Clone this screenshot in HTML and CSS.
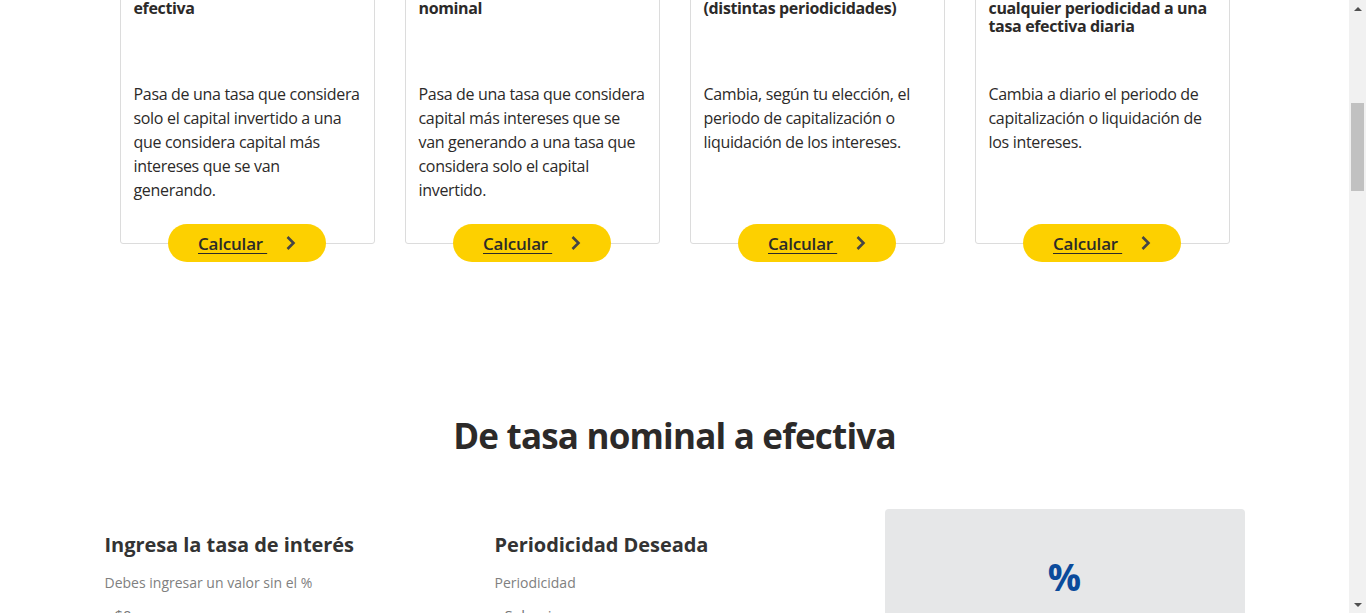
FILE: index.html
```html
<!DOCTYPE html>
<html lang="es">
<head>
<meta charset="utf-8">
<title>Calculadora de tasas</title>
<link rel="stylesheet" href="styles.css">
</head>
<body>
<div class="page">
  <main class="main">
    <section class="calcs">
      <div class="cards">
        <div class="item">
          <div class="card">
            <h3 class="card-title">De tasa nominal a<br>efectiva</h3>
            <p class="card-text">Pasa de una tasa que considera solo el capital invertido a una que considera capital más intereses que se van generando.</p>
          </div>
          <a class="btn" href="#"><span class="btn-label">Calcular </span><svg class="chev" width="11" height="16" viewBox="0 0 11 16"><path d="M2.5 2 L8.5 8 L2.5 14" fill="none" stroke="#454545" stroke-width="2.6"/></svg></a>
        </div>
        <div class="item">
          <div class="card">
            <h3 class="card-title">De tasa efectiva a<br>nominal</h3>
            <p class="card-text">Pasa de una tasa que considera capital más intereses que se van generando a una tasa que considera solo el capital invertido.</p>
          </div>
          <a class="btn" href="#"><span class="btn-label">Calcular </span><svg class="chev" width="11" height="16" viewBox="0 0 11 16"><path d="M2.5 2 L8.5 8 L2.5 14" fill="none" stroke="#454545" stroke-width="2.6"/></svg></a>
        </div>
        <div class="item">
          <div class="card">
            <h3 class="card-title">De tasa efectiva a efectiva<br>(distintas periodicidades)</h3>
            <p class="card-text">Cambia, según tu elección, el periodo de capitalización o liquidación de los intereses.</p>
          </div>
          <a class="btn" href="#"><span class="btn-label">Calcular </span><svg class="chev" width="11" height="16" viewBox="0 0 11 16"><path d="M2.5 2 L8.5 8 L2.5 14" fill="none" stroke="#454545" stroke-width="2.6"/></svg></a>
        </div>
        <div class="item">
          <div class="card">
            <h3 class="card-title">De tasa efectiva de<br>cualquier periodicidad a una<br>tasa efectiva diaria</h3>
            <p class="card-text">Cambia a diario el periodo de capitalización o liquidación de los intereses.</p>
          </div>
          <a class="btn" href="#"><span class="btn-label">Calcular </span><svg class="chev" width="11" height="16" viewBox="0 0 11 16"><path d="M2.5 2 L8.5 8 L2.5 14" fill="none" stroke="#454545" stroke-width="2.6"/></svg></a>
        </div>
      </div>
    </section>

    <section class="calc">
      <h2 class="calc-title">De tasa nominal a efectiva</h2>
      <div class="calc-grid">
        <div class="field">
          <h4 class="field-title">Ingresa la tasa de interés</h4>
          <p class="field-hint">Debes ingresar un valor sin el %</p>
          <div class="input">$0</div>
        </div>
        <div class="field">
          <h4 class="field-title">Periodicidad Deseada</h4>
          <p class="field-hint">Periodicidad</p>
          <div class="input select"><span>Seleccione</span><span class="sel-arrow">&#8964;</span></div>
        </div>
        <div class="result">
          <div class="result-value">%</div>
        </div>
      </div>
    </section>
  </main>
  <aside class="scrollbar">
    <div class="sb-btn"><span class="tri-up"></span></div>
    <div class="sb-track"><div class="sb-thumb"></div></div>
    <div class="sb-btn"><span class="tri-down"></span></div>
  </aside>
</div>
</body>
</html>
```

FILE: styles.css
```css
* { box-sizing: border-box; }
html, body { margin: 0; padding: 0; }
body {
  height: 613px;
  overflow: hidden;
  background: #fff;
  font-family: "Open Sans", "Noto Sans", Arial, sans-serif;
  color: #2c2a29;
}
.page {
  display: flex;
  height: 613px;
}
.main {
  flex: 1;
  overflow: hidden;
}

/* cards */
.calcs {
  margin-top: -44px;
}
.cards {
  width: 1110px;
  margin: 0 auto;
  display: grid;
  grid-template-columns: repeat(4, 1fr);
  gap: 30px;
}
.item {
  display: flex;
  flex-direction: column;
  align-items: center;
}
.card {
  align-self: stretch;
  flex: 1;
  border: 1px solid #dcdcdc;
  border-radius: 3px;
  padding: 24px 13px 41px 13px;
}
.card-title {
  margin: 0 0 47px;
  height: 54px;
  font-size: 16px;
  line-height: 18px;
  font-weight: 700;
  letter-spacing: -0.35px;
}
.card-text {
  margin: 0;
  font-size: 16px;
  line-height: 24px;
  letter-spacing: -0.32px;
  color: #2c2a29;
}
.btn {
  margin-top: -20px;
  width: 158px;
  height: 38px;
  border-radius: 19px;
  background: #fdd000;
  display: flex;
  align-items: center;
  padding-left: 30px;
  gap: 18px;
  text-decoration: none;
  color: #2c2a29;
}
.btn-label {
  font-size: 17px;
  font-weight: 600;
  text-decoration: underline;
  text-underline-offset: 3px;
  letter-spacing: -0.2px;
  white-space: pre;
}
.chev { display: block; }

/* calculator */
.calc {
  width: 1140px;
  margin: 0 auto;
  padding-top: 150px;
}
.calc-title {
  margin: 0;
  text-align: center;
  font-size: 35px;
  line-height: 48px;
  font-weight: 700;
  letter-spacing: -0.8px;
  color: #2c2a29;
}
.calc-grid {
  margin-top: 49px;
  display: grid;
  grid-template-columns: repeat(3, 360px);
  gap: 30px;
}
.field { padding-top: 21px; }
.field-title {
  margin: 0;
  font-size: 20px;
  line-height: 30px;
  font-weight: 700;
  letter-spacing: -0.05px;
  color: #333;
}
.field-hint {
  margin: 13px 0 0;
  font-size: 14px;
  line-height: 20px;
  color: #808080;
}
.input {
  margin-top: 12px;
  padding-left: 10px;
  font-size: 15px;
  color: #777;
}
.select {
  display: flex;
  justify-content: space-between;
  padding-right: 10px;
}
.result {
  background: #e6e7e8;
  border-radius: 4px;
  height: 200px;
  display: flex;
  justify-content: center;
  padding-top: 43px;
}
.result-value {
  font-size: 37px;
  line-height: 50px;
  font-weight: 700;
  color: #0a4b9b;
}

/* fake scrollbar */
.scrollbar {
  width: 17px;
  background: #f1f1f1;
  display: flex;
  flex-direction: column;
}
.sb-btn {
  height: 17px;
  display: flex;
  align-items: center;
  justify-content: center;
}
.tri-up, .tri-down {
  width: 0; height: 0;
  border-left: 4px solid transparent;
  border-right: 4px solid transparent;
}
.tri-up { border-bottom: 4px solid #505050; }
.tri-down { border-top: 4px solid #505050; }
.sb-track { flex: 1; padding: 86px 2px 0; }
.sb-thumb {
  height: 88px;
  background: #c1c1c1;
}
```
